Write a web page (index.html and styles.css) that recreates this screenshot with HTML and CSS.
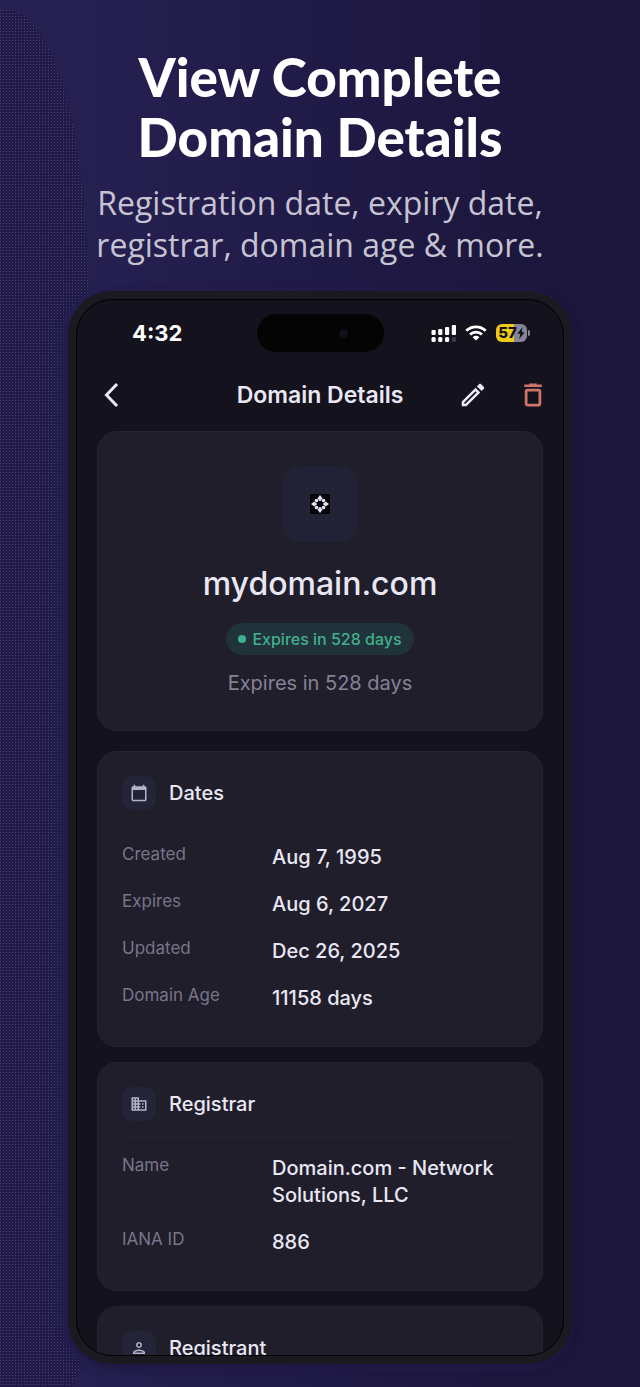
FILE: index.html
```html
<!DOCTYPE html>
<html lang="en">
<head>
    <meta charset="UTF-8">
    <meta name="viewport" content="width=device-width, initial-scale=1.0">
    <title>Domain Details</title>
    <link rel="stylesheet" href="styles.css">
</head>
<body>
    <header class="promo">
        <h1>View Complete<br>Domain Details</h1>
        <p>Registration date, expiry date,<br>registrar, domain age &amp; more.</p>
    </header>

    <div class="phone">
        <div class="screen">
            <!-- Status bar -->
            <div class="status-bar">
                <span class="time">4:32</span>
                <div class="island"><span class="lens"></span></div>
                <div class="status-icons">
                    <svg width="26" height="18" viewBox="0 0 26 18" fill="#fff">
                        <rect x="1.5" y="6" width="4.2" height="5" rx="1"/>
                        <rect x="8.2" y="5" width="4.2" height="6" rx="1"/>
                        <rect x="15" y="3" width="4.2" height="8" rx="1"/>
                        <rect x="21.8" y="1" width="4.2" height="10" rx="1"/>
                        <rect x="1.5" y="13" width="4.2" height="5" rx="1.5"/>
                        <rect x="8.2" y="13" width="4.2" height="5" rx="1.5"/>
                        <rect x="15" y="13" width="4.2" height="5" rx="1.5"/>
                        <rect x="21.8" y="13" width="4.2" height="5" rx="1.5" fill="#3b3948"/>
                    </svg>
                    <svg width="22" height="16" viewBox="0 0 22 16" fill="none" stroke="#fff" stroke-width="2.8">
                        <path d="M1.3 5.7a14 14 0 0 1 19.4 0"/>
                        <path d="M5 9.6a8.6 8.6 0 0 1 12 0"/>
                        <path d="M11 15.6L7.6 12.2a4.9 4.9 0 0 1 6.8 0z" fill="#fff" stroke="none"/>
                    </svg>
                    <div class="battery">
                        <span>57</span>
                        <svg width="8" height="12" viewBox="0 0 8 12"><path d="M5.6 0L0.3 6.8h3L2.2 12 7.7 5.2h-3z" fill="#111"/></svg>
                    </div>
                </div>
            </div>

            <!-- App bar -->
            <div class="app-bar">
                <button class="icon-button" aria-label="Back">
                    <svg width="30" height="30" viewBox="0 0 30 30" fill="none" stroke="#eae8f5" stroke-width="3"><path d="M20 4L9.500 15 20 26"/></svg>
                </button>
                <h2>Domain Details</h2>
                <div class="actions">
                    <button class="icon-button" aria-label="Edit">
                        <svg width="30" height="30" viewBox="0 0 24 24" fill="#eae8f5"><path d="M14.060 9.020l.92.92L5.920 19H5v-.92l9.060-9.060M17.660 3c-.25 0-.51.1-.7.29l-1.830 1.830 3.750 3.750 1.830-1.830c.39-.39.39-1.020 0-1.410l-2.340-2.340c-.2-.2-.45-.29-.68-.29zm-3.600 3.190L3 17.250V21h3.750L17.810 9.940l-3.750-3.750z"/></svg>
                    </button>
                    <button class="icon-button" aria-label="Delete">
                        <svg width="30" height="30" viewBox="0 0 24 24" fill="none" stroke="#cf7468" stroke-width="2"><path d="M5 4.500h14"/><path d="M9 3.800h6" stroke-width="2.200"/><rect x="6.500" y="8" width="11" height="12" rx="1.200" stroke-width="2.200"/></svg>
                    </button>
                </div>
            </div>

            <main class="content">
                <section class="card summary">
                    <div class="favicon">
                        <svg width="20" height="20" viewBox="0 0 20 20">
                            <rect width="20" height="20" fill="#050507"/>
                            <g fill="#e6e3f2">
                                <path d="M10 1l2.500 3.200L10 7.400 7.500 4.200z"/>
                                <path d="M10 19l2.500-3.200L10 12.600l-2.500 3.200z"/>
                                <path d="M1 10l3.200-2.500L7.400 10l-3.200 2.500z"/>
                                <path d="M19 10l-3.200-2.500L12.600 10l3.200 2.500z"/>
                                <circle cx="6.500" cy="6.500" r="1.800"/>
                                <circle cx="13.500" cy="6.500" r="1.800"/>
                                <circle cx="6.500" cy="13.500" r="1.800"/>
                                <circle cx="13.500" cy="13.500" r="1.800"/>
                            </g>
                        </svg>
                    </div>
                    <h3>mydomain.com</h3>
                    <span class="badge">Expires in 528 days</span>
                    <p>Expires in 528 days</p>
                </section>

                <section class="card">
                    <div class="card-head">
                        <div class="card-icon">
                            <svg width="18" height="18" viewBox="0 0 24 24" fill="#b5b2c6"><path d="M20 3h-1V1h-2v2H7V1H5v2H4c-1.100 0-2 .9-2 2v16c0 1.100.9 2 2 2h16c1.100 0 2-.9 2-2V5c0-1.100-.9-2-2-2zm0 18H4V8h16v13z"/></svg>
                        </div>
                        <h4>Dates</h4>
                    </div>
                    <dl>
                        <div class="row"><dt>Created</dt><dd>Aug 7, 1995</dd></div>
                        <div class="row"><dt>Expires</dt><dd>Aug 6, 2027</dd></div>
                        <div class="row"><dt>Updated</dt><dd>Dec 26, 2025</dd></div>
                        <div class="row"><dt>Domain Age</dt><dd>11158 days</dd></div>
                    </dl>
                </section>

                <section class="card">
                    <div class="card-head">
                        <div class="card-icon">
                            <svg width="18" height="18" viewBox="0 0 24 24" fill="#b5b2c6"><path d="M12 7V3H2v18h20V7H12zM6 19H4v-2h2v2zm0-4H4v-2h2v2zm0-4H4V9h2v2zm0-4H4V5h2v2zm4 12H8v-2h2v2zm0-4H8v-2h2v2zm0-4H8V9h2v2zm0-4H8V5h2v2zm10 12h-8v-2h2v-2h-2v-2h2v-2h-2V9h8v10zm-2-8h-2v2h2v-2zm0 4h-2v2h2v-2z"/></svg>
                        </div>
                        <h4>Registrar</h4>
                    </div>
                    <dl>
                        <div class="row"><dt>Name</dt><dd>Domain.com - Network Solutions, LLC</dd></div>
                        <div class="row"><dt>IANA ID</dt><dd>886</dd></div>
                    </dl>
                </section>

                <section class="card">
                    <div class="card-head">
                        <div class="card-icon">
                            <svg width="18" height="18" viewBox="0 0 24 24" fill="#b5b2c6"><path d="M12 6c1.100 0 2 .9 2 2s-.9 2-2 2-2-.9-2-2 .9-2 2-2m0 10c2.700 0 5.800 1.290 6 2H6c.23-.72 3.310-2 6-2m0-12C9.790 4 8 5.790 8 8s1.790 4 4 4 4-1.790 4-4-1.790-4-4-4zm0 10c-2.670 0-8 1.340-8 4v2h16v-2c0-2.660-5.330-4-8-4z"/></svg>
                        </div>
                        <h4>Registrant</h4>
                    </div>
                </section>
            </main>
        </div>
    </div>
</body>
</html>
```
FILE: styles.css
```css
* {
    box-sizing: border-box;
}

body {
    margin: 0;
    height: 100vh;
    padding: 47px 68px 23px;
    display: flex;
    flex-direction: column;
    position: relative;
    overflow: hidden;
    background: linear-gradient(90deg, #262152 0%, #252050 15%, #201a47 50%, #1b163a 90%);
    font-family: Inter, "Liberation Sans", sans-serif;
    color: #e9e7f4;
}

/* grainy oval behind the left edge */
body::before {
    content: "";
    position: absolute;
    top: 10px;
    bottom: 0;
    left: 0;
    width: 88px;
    border-radius: 0 80px 20px 0 / 0 280px 100px 0;
    background-color: #211b4c;
    background-image: conic-gradient(at 1px 1px, transparent 75%, #4c485e 0);
    background-size: 3px 3px;
}

h1, h2, h3, h4, p, dl, dd {
    margin: 0;
}

.promo {
    position: relative;
    text-align: center;
    margin: 0 -40px 25px;
}

.promo h1 {
    font-family: Lato, sans-serif;
    font-size: 53px;
    font-weight: 900;
    line-height: 60px;
    color: #fff;
}

.promo p {
    margin-top: 15px;
    font-family: "Open Sans", sans-serif;
    font-size: 32px;
    line-height: 42px;
    color: #c6c3d2;
}

.phone {
    position: relative;
    flex: 1;
    min-height: 0;
    padding: 8px;
    border-radius: 44px;
    background-color: #1b1a20;
    box-shadow: 0 4px 8px #1d173f, -4px 2px 6px 3px #252054;
}

.screen {
    height: 100%;
    overflow: hidden;
    border: 1px solid #000;
    border-radius: 36px;
    background-color: #14121d;
}

.status-bar {
    display: grid;
    grid-template-columns: 1fr 127px 1fr;
    align-items: center;
    padding: 14px 36px 0;
    height: 52px;
}

.time {
    padding-left: 19px;
    font-size: 22px;
    font-weight: 700;
    color: #fff;
}

.island {
    display: flex;
    align-items: center;
    justify-content: flex-end;
    height: 38px;
    padding-right: 36px;
    border-radius: 19px;
    background-color: #040405;
}

.lens {
    width: 9px;
    height: 9px;
    border-radius: 50%;
    background-color: #10101f;
}

.status-icons {
    display: flex;
    align-items: center;
    justify-content: flex-end;
    gap: 9px;
}

.battery {
    position: relative;
    display: flex;
    align-items: center;
    justify-content: center;
    width: 31px;
    height: 18px;
    border-radius: 6px;
    background: linear-gradient(90deg, #edc918 57%, #86849a 57%);
    font-size: 15px;
    font-weight: 800;
    line-height: 18px;
    color: #111;
}

.battery::after {
    content: "";
    position: absolute;
    right: -3px;
    top: 6px;
    width: 2px;
    height: 6px;
    border-radius: 0 2px 2px 0;
    background-color: #86849a;
}

.app-bar {
    display: grid;
    grid-template-columns: 1fr auto 1fr;
    align-items: center;
    height: 79px;
    padding: 6px 15px 0;
}

.app-bar h2 {
    font-size: 23px;
    font-weight: 600;
    line-height: 30px;
}

.icon-button {
    display: flex;
    width: 30px;
    height: 30px;
    padding: 0;
    border: none;
    background: none;
    cursor: pointer;
}

.app-bar > .icon-button {
    margin-left: 5px;
}

.actions {
    display: flex;
    justify-content: flex-end;
    gap: 30px;
}

.content {
    padding: 0 20px;
}

.card {
    margin-bottom: 15px;
    padding: 24px;
    border: 1px solid #262431;
    border-radius: 20px;
    background-color: #201e2b;
}

.summary {
    display: flex;
    flex-direction: column;
    align-items: center;
    margin-bottom: 20px;
    padding: 34px 24px 33px;
}

.favicon {
    display: flex;
    align-items: center;
    justify-content: center;
    width: 76px;
    height: 76px;
    border-radius: 20px;
    background-color: #222236;
}

.summary h3 {
    margin-top: 20px;
    font-size: 32px;
    font-weight: 500;
    line-height: 44px;
}

.badge {
    display: flex;
    align-items: center;
    gap: 6px;
    height: 32px;
    margin-top: 17px;
    padding: 0 12px;
    border-radius: 16px;
    background-color: #20323a;
    font-size: 16px;
    font-weight: 500;
    color: #41b08c;
}

.badge::before {
    content: "";
    width: 8px;
    height: 8px;
    border-radius: 50%;
    background-color: #41b08c;
}

.summary p {
    margin-top: 15px;
    font-size: 20px;
    line-height: 27px;
    color: #858296;
}

.card-head {
    display: flex;
    align-items: center;
    gap: 13px;
    padding-bottom: 15px;
    border-bottom: 1px solid #242230;
    margin-bottom: 8px;
}

.card-icon {
    display: flex;
    align-items: center;
    justify-content: center;
    width: 34px;
    height: 34px;
    border-radius: 10px;
    background-color: #242438;
}

.card-head h4 {
    font-size: 20px;
    font-weight: 500;
    line-height: 27px;
}

.row {
    display: grid;
    grid-template-columns: 150px 1fr;
    padding: 10px 0;
}

.row dt {
    font-size: 17px;
    line-height: 20px;
    color: #787589;
}

.row dd {
    font-size: 20px;
    font-weight: 500;
    line-height: 27px;
}
```
